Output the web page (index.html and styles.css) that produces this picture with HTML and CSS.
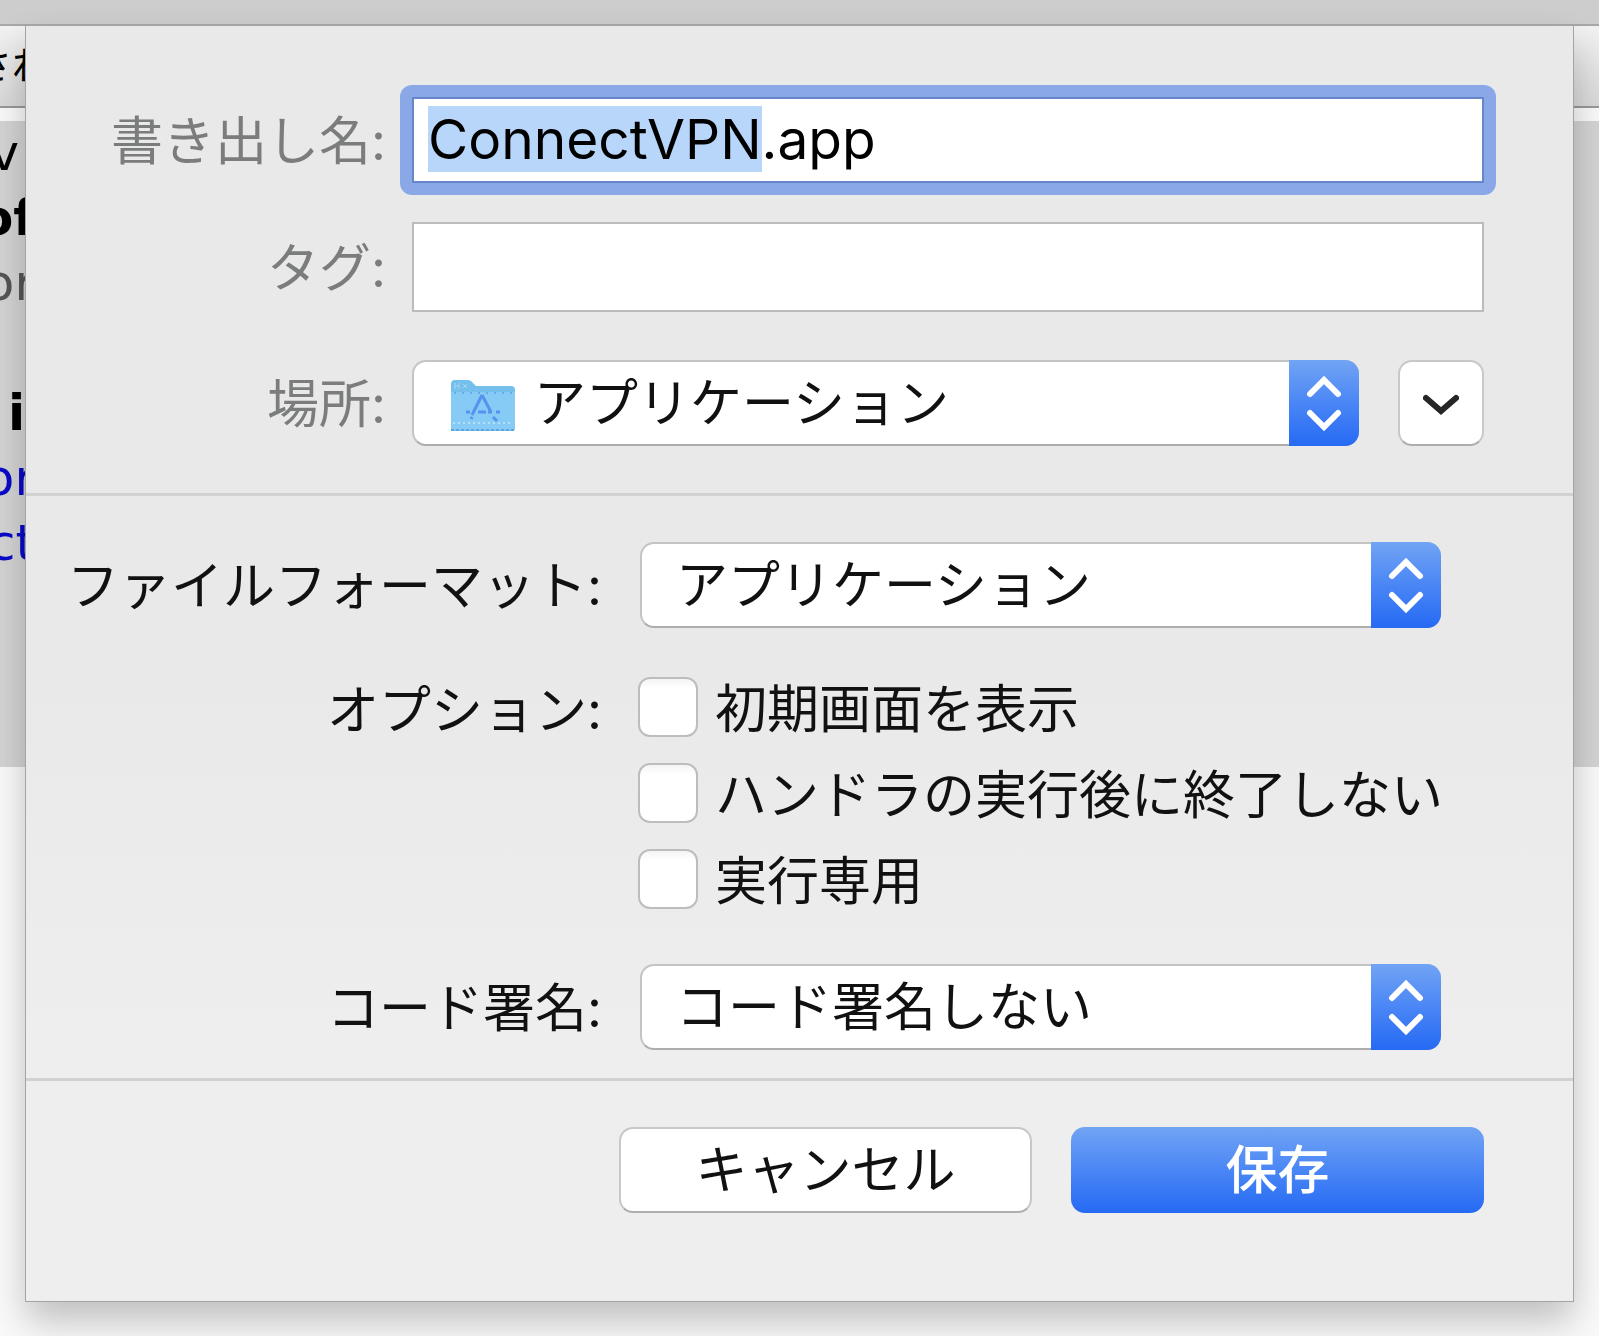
FILE: index.html
```
<!DOCTYPE html>
<html lang="ja">
<head>
	<meta charset="utf-8">
	<title>書き出し</title>
	<link rel="stylesheet" href="styles.css">
</head>
<body>
	<div class="window">
		<div class="titlebar"></div>
		<div class="toolbar"><span class="toolbar-text">され</span></div>
		<div class="toolbar-edge"></div>
		<div class="editor">
			<div class="code">
				<div class="line">v&nbsp;</div>
				<div class="line keyword">of</div>
				<div class="line comment">or</div>
				<div class="line">&nbsp;</div>
				<div class="line keyword">i&thinsp;</div>
				<div class="line name">or</div>
				<div class="line name">ct</div>
			</div>
		</div>
	</div>

	<form class="sheet">
		<div class="section file-section">
			<div class="row">
				<label class="label" for="name">書き出し名:</label>
				<div class="focus-ring">
					<input type="text" id="name" class="text-input name-input" value="ConnectVPN.app">
				</div>
			</div>
			<div class="row">
				<label class="label" for="tags">タグ:</label>
				<input type="text" id="tags" class="text-input tag-input">
			</div>
			<div class="row location-row">
				<label class="label" for="location">場所:</label>
				<div class="popup">
					<select id="location" class="with-icon">
						<option>アプリケーション</option>
					</select>
					<svg class="folder" viewBox="0 0 66 54" aria-hidden="true">
						<path d="M1 5Q1 1 5 1H18Q21 1 23 4L26 7H61Q65 7 65 11V49Q65 52 62 52H4Q1 52 1 49Z" fill="#74bfec"/>
						<path d="M1 13H65V49Q65 51 62 51H4Q1 51 1 49Z" fill="#86cbf6"/>
						<path d="M5 4V10M9 4V10M5 7H9M13 5L17 9M17 5L13 9" stroke="#a5d6f5" stroke-width="1"/>
						<path d="M4 14H63" stroke="#62aeea" stroke-width="2" stroke-dasharray="2 6"/>
						<path d="M3 44H63" stroke="#b5e0fb" stroke-width="2" stroke-dasharray="2 3"/>
						<path d="M1 51H65" stroke="#5ba5e0" stroke-width="2" stroke-dasharray="3 2"/>
						<path d="M32 16L22 36M32 16L41 33M21 40L22 38M43 38L47 42M28 33H36M16 33H20M38 33H42M46 33H50" stroke="#5593ee" stroke-width="3" fill="none"/>
					</svg>
					<span class="cap">
						<svg viewBox="0 0 70 86" aria-hidden="true"><path d="M21 34L35 20L49 34M21 53L35 67L49 53"/></svg>
					</span>
				</div>
				<button type="button" class="button expand" aria-label="詳細を表示">
					<svg viewBox="0 0 36 22" aria-hidden="true"><path d="M3 5L18 18L33 5"/></svg>
				</button>
			</div>
		</div>

		<div class="section option-section">
			<div class="row">
				<label class="label" for="format">ファイルフォーマット:</label>
				<div class="popup">
					<select id="format">
						<option>アプリケーション</option>
					</select>
					<span class="cap">
						<svg viewBox="0 0 70 86" aria-hidden="true"><path d="M21 34L35 20L49 34M21 53L35 67L49 53"/></svg>
					</span>
				</div>
			</div>
			<div class="row checks-row" role="group" aria-labelledby="options">
				<span class="label" id="options">オプション:</span>
				<div class="checks">
					<label class="check"><input type="checkbox"><span class="check-text">初期画面を表示</span></label>
					<label class="check"><input type="checkbox"><span class="check-text">ハンドラの実行後に終了しない</span></label>
					<label class="check"><input type="checkbox"><span class="check-text">実行専用</span></label>
				</div>
			</div>
			<div class="row">
				<label class="label" for="sign">コード署名:</label>
				<div class="popup">
					<select id="sign">
						<option>コード署名しない</option>
					</select>
					<span class="cap">
						<svg viewBox="0 0 70 86" aria-hidden="true"><path d="M21 34L35 20L49 34M21 53L35 67L49 53"/></svg>
					</span>
				</div>
			</div>
		</div>

		<div class="section actions">
			<button type="button" class="button">キャンセル</button>
			<button type="submit" class="button primary">保存</button>
		</div>
	</form>

	<script>
		// select the file name without its extension
		const nameInput = document.getElementById('name');
		nameInput.focus();
		nameInput.setSelectionRange(0, nameInput.value.lastIndexOf('.'));
	</script>
</body>
</html>
```
FILE: styles.css
```
* {
	box-sizing: border-box;
}
body {
	margin: 0;
	background-color: #fafafa;
	color: #111;
	font-family: Inter, "Noto Sans CJK JP", sans-serif;
	font-size: 52px;
	line-height: 60px;
}
input, select, button {
	font: inherit;
	color: inherit;
}

/* window behind the sheet */
.window {
	height: 100vh;
	overflow: hidden;
}
.titlebar {
	height: 26px;
	background-color: #cdcdcd;
	border-bottom: 2px solid #a8a8a8;
}
.toolbar {
	height: 82px;
	background: linear-gradient(#f2f2f2, #d8d9d8);
	border-bottom: 2px solid #999;
}
.toolbar-text {
	display: flex;
	justify-content: flex-end;
	width: 50px;
	font-size: 38px;
	line-height: 78px;
	white-space: nowrap;
	color: #000;
}
.toolbar-edge {
	height: 13px;
	background-color: #fafafa;
}
.editor {
	height: 646px;
	background-color: #d4d4d4;
}
.code {
	width: 35px;
	font-family: "DejaVu Sans", sans-serif;
	font-size: 50px;
	line-height: 65px;
	color: #000;
}
.line {
	display: flex;
	justify-content: flex-end;
}
.keyword {
	font-weight: bold;
}
.comment {
	color: #555;
}
.name {
	color: #0a0ac8;
}

/* sheet */
.sheet {
	position: absolute;
	top: 26px;
	left: 26px;
	right: 26px;
	background: linear-gradient(#e8e9e8, #e9e9e9 50%, #eee 80%);
	box-shadow: 0 0 0 1px #a4a4a4, 0 20px 36px rgba(0,0,0,0.24);
}
.section + .section {
	border-top: 3px solid #d0d1d1;
}
.row {
	display: flex;
	align-items: center;
}
.label {
	flex: none;
	padding-top: 4px;
	text-align: right;
	white-space: nowrap;
}
.file-section {
	display: flex;
	flex-direction: column;
	gap: 39px;
	padding: 71px 89px 47px 0;
}
.file-section .label {
	width: 360px;
	margin-right: 26px;
	color: #7b7c7c;
}
.location-row {
	margin-top: 9px;
}
.option-section {
	padding: 46px 132px 28px 0;
}
.option-section .label {
	width: 576px;
	margin-right: 38px;
}
.text-input {
	flex: 1;
	min-width: 0;
	background-color: #fff;
	border: 2px solid #bcbcbc;
	border-radius: 0;
	outline: none;
}
.focus-ring {
	display: flex;
	flex: 1;
	margin: -12px;
	padding: 12px;
	border-radius: 12px;
}
.focus-ring:focus-within {
	background-color: #8aa8e8;
}
.name-input {
	height: 86px;
	padding: 6px 14px 8px;
	font-size: 55px;
	line-height: 68px;
	color: #000;
}
.name-input:focus {
	border-color: #6686c8;
}
.name-input::selection {
	background-color: #b8d6fa;
	color: #000;
}
.tag-input {
	height: 90px;
	padding: 8px 14px;
}

.popup {
	position: relative;
	flex: 1;
	min-width: 0;
}
select {
	display: block;
	appearance: none;
	width: 100%;
	height: 86px;
	padding: 2px 80px 0 34px;
	background-color: #fff;
	border: 2px solid #c4c4c4;
	border-bottom-color: #adadad;
	border-radius: 14px;
}
.with-icon {
	padding-left: 120px;
}
.folder {
	position: absolute;
	left: 38px;
	top: 19px;
	width: 66px;
	height: 54px;
}
.cap {
	position: absolute;
	top: 0;
	right: 0;
	width: 70px;
	height: 86px;
	background: linear-gradient(#72a4f4, #4a86f5 50%, #266af4);
	border-radius: 0 14px 14px 0;
	pointer-events: none;
}
.cap svg {
	display: block;
}
.cap path {
	fill: none;
	stroke: #fff;
	stroke-width: 6;
	stroke-linecap: round;
}

.button {
	flex: none;
	width: 413px;
	height: 86px;
	padding: 2px 0 0;
	background-color: #fff;
	border: 2px solid #c8c8c8;
	border-bottom-color: #adadad;
	border-radius: 14px;
}
.expand {
	display: flex;
	align-items: center;
	justify-content: center;
	width: 86px;
	margin-left: 39px;
}
.expand svg {
	width: 36px;
	height: 22px;
}
.expand path {
	fill: none;
	stroke: #262626;
	stroke-width: 6;
	stroke-linecap: round;
}
.primary {
	border: none;
	background: linear-gradient(#72a4f4, #4a86f5 50%, #266af4);
	color: #fff;
	font-weight: 500;
}

.checks-row {
	align-items: flex-start;
	margin: 49px 0 55px;
}
.checks {
	display: flex;
	flex-direction: column;
	gap: 26px;
	margin-left: -2px;
}
.check {
	display: flex;
	align-items: center;
	gap: 17px;
	white-space: nowrap;
}
.check-text {
	padding-top: 6px;
	line-height: 54px;
}
.check input {
	appearance: none;
	flex: none;
	width: 60px;
	height: 60px;
	margin: 0;
	background: linear-gradient(#f4f4f4, #fff 16%);
	border: 2px solid #bdbdbd;
	border-radius: 12px;
}
.check input:checked {
	background: #266af4;
}

.actions {
	display: flex;
	justify-content: flex-end;
	gap: 39px;
	padding: 46px 89px 88px;
}
```
